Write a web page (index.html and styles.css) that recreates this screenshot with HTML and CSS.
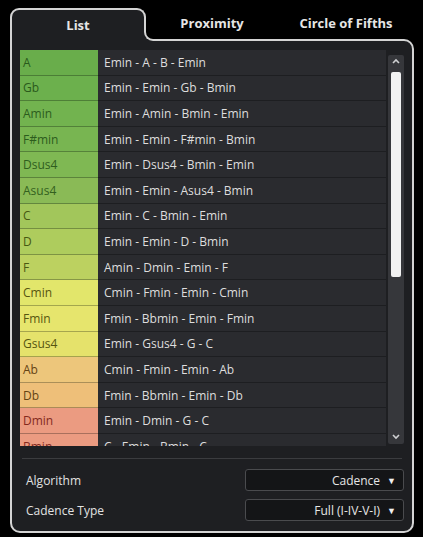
FILE: index.html
```html
<!DOCTYPE html>
<html lang="en">
<head>
  <meta charset="UTF-8" />
  <title>Chord Assistant</title>
  <link rel="stylesheet" href="styles.css">
</head>
<body>
  <div class="assistant">
    <div class="tabs">
      <div class="tab active">List</div>
      <div class="tab">Proximity</div>
      <div class="tab">Circle of Fifths</div>
    </div>

    <div class="panel">
      <div class="list-wrap">
        <div class="list">
          <div class="row"><span class="chord c1">A</span><span class="prog">Emin - A - B - Emin</span></div>
          <div class="row"><span class="chord c2">Gb</span><span class="prog">Emin - Emin - Gb - Bmin</span></div>
          <div class="row"><span class="chord c3">Amin</span><span class="prog">Emin - Amin - Bmin - Emin</span></div>
          <div class="row"><span class="chord c4">F#min</span><span class="prog">Emin - Emin - F#min - Bmin</span></div>
          <div class="row"><span class="chord c5">Dsus4</span><span class="prog">Emin - Dsus4 - Bmin - Emin</span></div>
          <div class="row"><span class="chord c6">Asus4</span><span class="prog">Emin - Emin - Asus4 - Bmin</span></div>
          <div class="row"><span class="chord c7">C</span><span class="prog">Emin - C - Bmin - Emin</span></div>
          <div class="row"><span class="chord c8">D</span><span class="prog">Emin - Emin - D - Bmin</span></div>
          <div class="row"><span class="chord c9">F</span><span class="prog">Amin - Dmin - Emin - F</span></div>
          <div class="row"><span class="chord c10">Cmin</span><span class="prog">Cmin - Fmin - Emin - Cmin</span></div>
          <div class="row"><span class="chord c11">Fmin</span><span class="prog">Fmin - Bbmin - Emin - Fmin</span></div>
          <div class="row"><span class="chord c12">Gsus4</span><span class="prog">Emin - Gsus4 - G - C</span></div>
          <div class="row"><span class="chord c13">Ab</span><span class="prog">Cmin - Fmin - Emin - Ab</span></div>
          <div class="row"><span class="chord c14">Db</span><span class="prog">Fmin - Bbmin - Emin - Db</span></div>
          <div class="row"><span class="chord c15">Dmin</span><span class="prog">Emin - Dmin - G - C</span></div>
          <div class="row"><span class="chord c15">Bmin</span><span class="prog">C - Emin - Bmin - C</span></div>
        </div>
        <div class="scrollbar">
          <svg class="arrow" width="16" height="14" viewBox="0 0 16 14"><path d="M5 8 L8 5 L11 8" fill="none" stroke="#cfd0d2" stroke-width="1.6"/></svg>
          <div class="thumb"></div>
          <div class="track-rest"></div>
          <svg class="arrow" width="16" height="14" viewBox="0 0 16 14"><path d="M5 5 L8 8 L11 5" fill="none" stroke="#cfd0d2" stroke-width="1.6"/></svg>
        </div>
      </div>

      <div class="separator"></div>

      <div class="field">
        <span class="label">Algorithm</span>
        <div class="select">Cadence <span class="caret">&#9660;</span></div>
      </div>
      <div class="field">
        <span class="label">Cadence Type</span>
        <div class="select">Full (I-IV-V-I) <span class="caret">&#9660;</span></div>
      </div>
    </div>
  </div>
</body>
</html>
```

FILE: styles.css
```css
* {
  margin: 0;
  padding: 0;
  box-sizing: border-box;
}

body {
  background: #000;
  font-family: 'Open Sans', 'Noto Sans', sans-serif;
  color: #dcdcdc;
  width: 423px;
  height: 537px;
  overflow: hidden;
}

.assistant {
  padding: 8px 9px 0 10px;
}

.tabs {
  display: flex;
  height: 31px;
  position: relative;
  z-index: 1;
}

.tab {
  font-size: 13px;
  font-weight: 700;
  color: #e6e6e6;
  display: flex;
  align-items: center;
  justify-content: center;
  height: 31px;
  padding-bottom: 2px;
}

.tab:nth-child(1) { width: 136px; }
.tab:nth-child(2) { width: 132px; }
.tab:nth-child(3) { width: 136px; }

.tab.active {
  position: relative;
  background: #1e1f22;
  border: 2px solid #d4d4d4;
  border-bottom: none;
  border-radius: 9px 9px 0 0;
  height: 33px;
  margin-bottom: -2px;
}

/* covers the panel border under the curve */
.tab.active::before {
  content: "";
  position: absolute;
  left: 100%;
  bottom: 0;
  width: 10px;
  height: 10px;
  background: #1e1f22;
}

/* outward curve joining the tab to the panel top */
.tab.active::after {
  content: "";
  position: absolute;
  left: 100%;
  bottom: 0;
  width: 8px;
  height: 8px;
  border-left: 2px solid #d4d4d4;
  border-bottom: 2px solid #d4d4d4;
  border-bottom-left-radius: 9px;
  background: #000;
  box-sizing: content-box;
}

.panel {
  background: #1e1f22;
  border: 2px solid #d4d4d4;
  border-radius: 0 10px 10px 10px;
  height: 494px;
  padding: 9px 8px 0 8px;
}

.list-wrap {
  display: flex;
  gap: 2px;
  height: 396px;
}

.list {
  flex: 1;
  overflow: hidden;
}

.row {
  display: flex;
  height: 25.6px;
  font-size: 12px;
}

.chord {
  width: 78px;
  padding: 0 3px;
  display: flex;
  align-items: center;
  border-bottom: 1px solid rgba(0, 0, 0, 0.28);
}

.prog {
  flex: 1;
  display: flex;
  align-items: center;
  padding-left: 6px;
  background: #2a2b2f;
  border-bottom: 1px solid #1d1e21;
  color: #dedede;
}

.c1  { background: #69ad4b; color: #2a5a1c; }
.c2  { background: #6cb04d; color: #2a5a1c; }
.c3  { background: #72b34f; color: #2c5c1d; }
.c4  { background: #78b551; color: #2c5c1d; }
.c5  { background: #7fb853; color: #2f5e1e; }
.c6  { background: #8aba56; color: #33611e; }
.c7  { background: #a2c65b; color: #465812; }
.c8  { background: #aecc5d; color: #465812; }
.c9  { background: #bcd160; color: #4c5812; }
.c10 { background: #e2e66b; color: #575510; }
.c11 { background: #e6e56d; color: #575510; }
.c12 { background: #e5e26b; color: #575510; }
.c13 { background: #edc67b; color: #654314; }
.c14 { background: #eebf79; color: #654314; }
.c15 { background: #eb9b81; color: #84291d; }

.scrollbar {
  width: 16px;
  margin-top: 5px;
  margin-bottom: 2px;
  background: #36373b;
  border-radius: 2px;
  display: flex;
  flex-direction: column;
  align-items: center;
}

.arrow {
  display: block;
  flex: none;
}

.thumb {
  width: 10px;
  height: 205px;
  background: #f2f2f2;
  border-radius: 2px;
  margin-top: 3px;
}

.track-rest {
  flex: 1;
}

.separator {
  height: 1px;
  background: #3b3c3f;
  margin: 12px 2px 0 2px;
}

.field {
  display: flex;
  align-items: center;
  justify-content: space-between;
  margin-top: 10px;
  padding-left: 6px;
}

.field + .field {
  margin-top: 8px;
}

.label {
  font-size: 12px;
  color: #e2e2e2;
}

.select {
  width: 159px;
  height: 22px;
  border: 1px solid #4a4b4e;
  border-radius: 3px;
  background: #141517;
  font-size: 12px;
  color: #e6e6e6;
  display: flex;
  align-items: center;
  justify-content: flex-end;
  gap: 7px;
  padding-right: 7px;
}

.caret {
  font-size: 9px;
  color: #f0f0f0;
}
```
